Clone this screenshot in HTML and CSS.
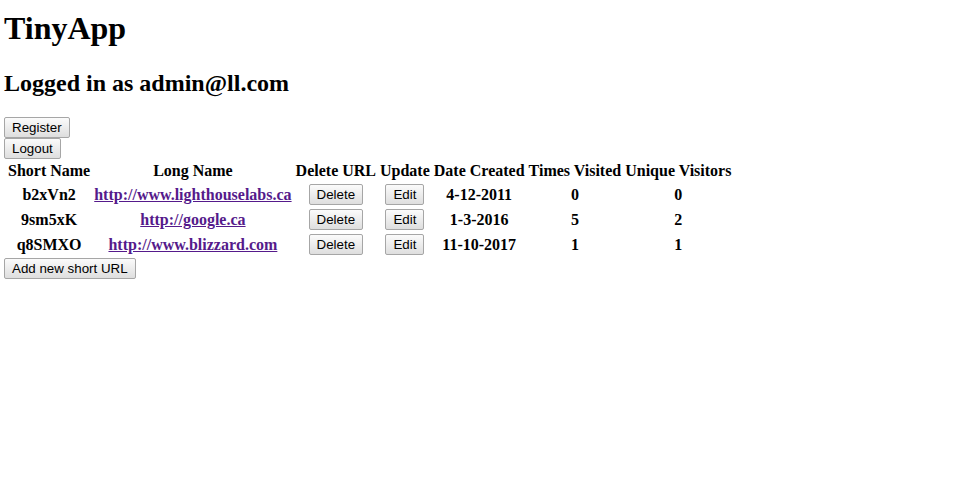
FILE: index.html
```html
<!DOCTYPE html>
<html>
<head>
<meta charset="utf-8">
<title>TinyApp</title>
<link rel="stylesheet" href="styles.css">
</head>
<body>
<h1 class="title">TinyApp</h1>
<h2 class="user">Logged in as admin@ll.com</h2>
<form class="block-form"><button type="button" class="btn">Register</button></form>
<form class="block-form"><button type="button" class="btn">Logout</button></form>
<table class="urls">
  <tr>
    <th>Short Name</th><th>Long Name</th><th>Delete URL</th><th>Update</th><th>Date Created</th><th>Times Visited</th><th>Unique Visitors</th>
  </tr>
  <tr>
    <td>b2xVn2</td><td><a class="link" href="#">http://www.lighthouselabs.ca</a></td><td><button type="button" class="btn">Delete</button></td><td><button type="button" class="btn">Edit</button></td><td>4-12-2011</td><td>0</td><td>0</td>
  </tr>
  <tr>
    <td>9sm5xK</td><td><a class="link" href="#">http://google.ca</a></td><td><button type="button" class="btn">Delete</button></td><td><button type="button" class="btn">Edit</button></td><td>1-3-2016</td><td>5</td><td>2</td>
  </tr>
  <tr>
    <td>q8SMXO</td><td><a class="link" href="#">http://www.blizzard.com</a></td><td><button type="button" class="btn">Delete</button></td><td><button type="button" class="btn">Edit</button></td><td>11-10-2017</td><td>1</td><td>1</td>
  </tr>
</table>
<form class="block-form"><button type="button" class="btn">Add new short URL</button></form>
</body>
</html>
```
FILE: styles.css
```css
html, body {
  background: #ffffff;
}
body {
  margin: 0;
  padding: 4px;
  font-family: "Liberation Serif", "Times New Roman", serif;
  color: #000;
}
.title {
  font-size: 32px;
  font-weight: bold;
  margin: 6px 0 23px;
  line-height: normal;
}
.user {
  font-size: 24px;
  font-weight: bold;
  margin: 0 0 20px;
  line-height: normal;
}
.block-form {
  display: block;
  margin: 0;
}
.btn {
  font-family: "Liberation Sans", Arial, sans-serif;
  font-size: 13.333px;
  color: #000;
  background: linear-gradient(#fbfbfb, #dedede);
  border: 1px solid #a6a6a6;
  border-radius: 2px;
  padding: 2px 7px 2px;
  margin: 0;
  height: 21px;
  line-height: 15px;
  cursor: pointer;
}
.urls {
  border-collapse: separate;
  border-spacing: 2px;
  margin-left: 1px;
  font-size: 16px;
}
.urls th, .urls td {
  padding: 1px;
  text-align: center;
  font-weight: bold;
}
.link {
  color: #551a8b;
  text-decoration: underline;
}
```
